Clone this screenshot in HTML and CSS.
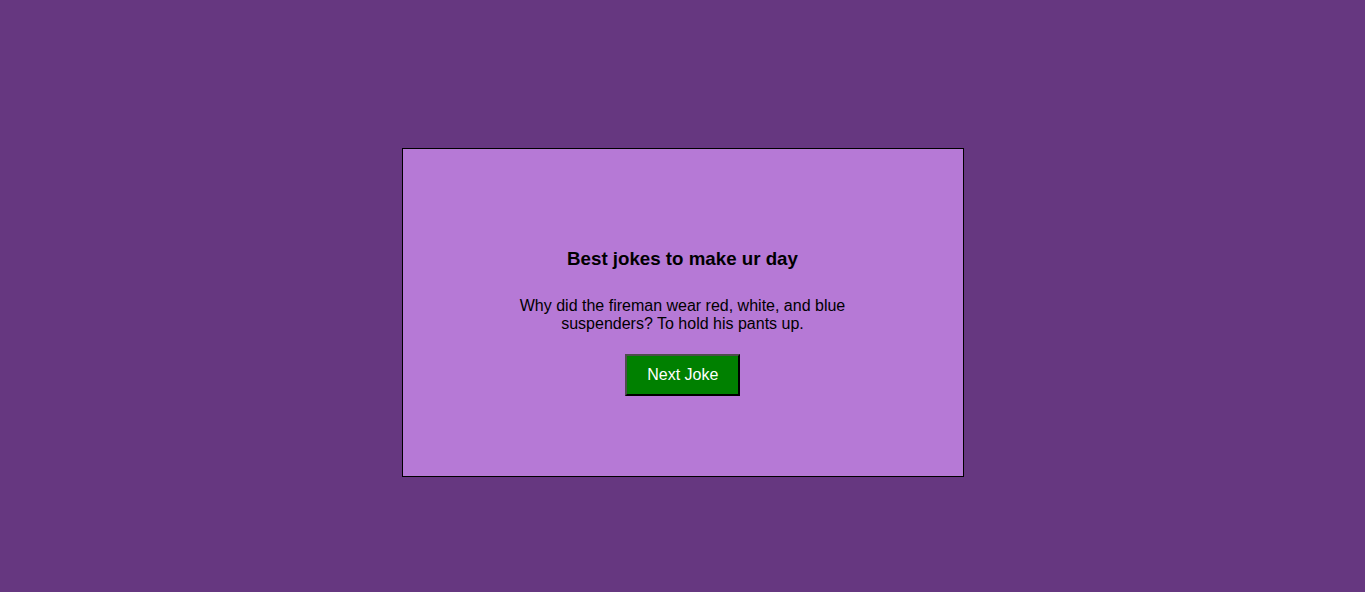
FILE: index.html
```html
<!DOCTYPE html>
<html lang="en">
<head>
<meta charset="utf-8">
<title>Jokes</title>
<link rel="stylesheet" href="styles.css">
</head>
<body>
<main class="page">
  <section class="card">
    <h1 class="title">Best jokes to make ur day</h1>
    <p class="joke">Why did the fireman wear red, white, and blue suspenders? To hold his pants up.</p>
    <button class="next-btn" type="button">Next Joke</button>
  </section>
</main>
</body>
</html>
```
FILE: styles.css
```css
html, body {
  margin: 0;
  padding: 0;
}
body {
  background: #663780;
  font-family: "Liberation Sans", Arial, sans-serif;
  min-height: 592px;
}
.page {
  display: flex;
  justify-content: center;
  padding-top: 148px;
}
.card {
  box-sizing: border-box;
  width: 562px;
  height: 329px;
  background: #b679d6;
  border: 1px solid #000;
  display: flex;
  flex-direction: column;
  align-items: center;
  padding-top: 99px;
}
.title {
  margin: 0;
  font-size: 18.72px;
  font-weight: bold;
  line-height: 22px;
  color: #000;
}
.joke {
  margin: 27px 0 0;
  max-width: 350px;
  text-align: center;
  font-size: 16px;
  line-height: 18px;
  color: #000;
}
.next-btn {
  margin-top: 21px;
  font-family: "Liberation Sans", Arial, sans-serif;
  font-size: 16px;
  line-height: 18px;
  color: #fff;
  background: #008000;
  padding: 10px 20px 10px 20.5px;
  border-width: 2px;
  border-style: solid;
  border-color: #4d4d4d #000 #000 #4d4d4d;
  cursor: pointer;
}
```
